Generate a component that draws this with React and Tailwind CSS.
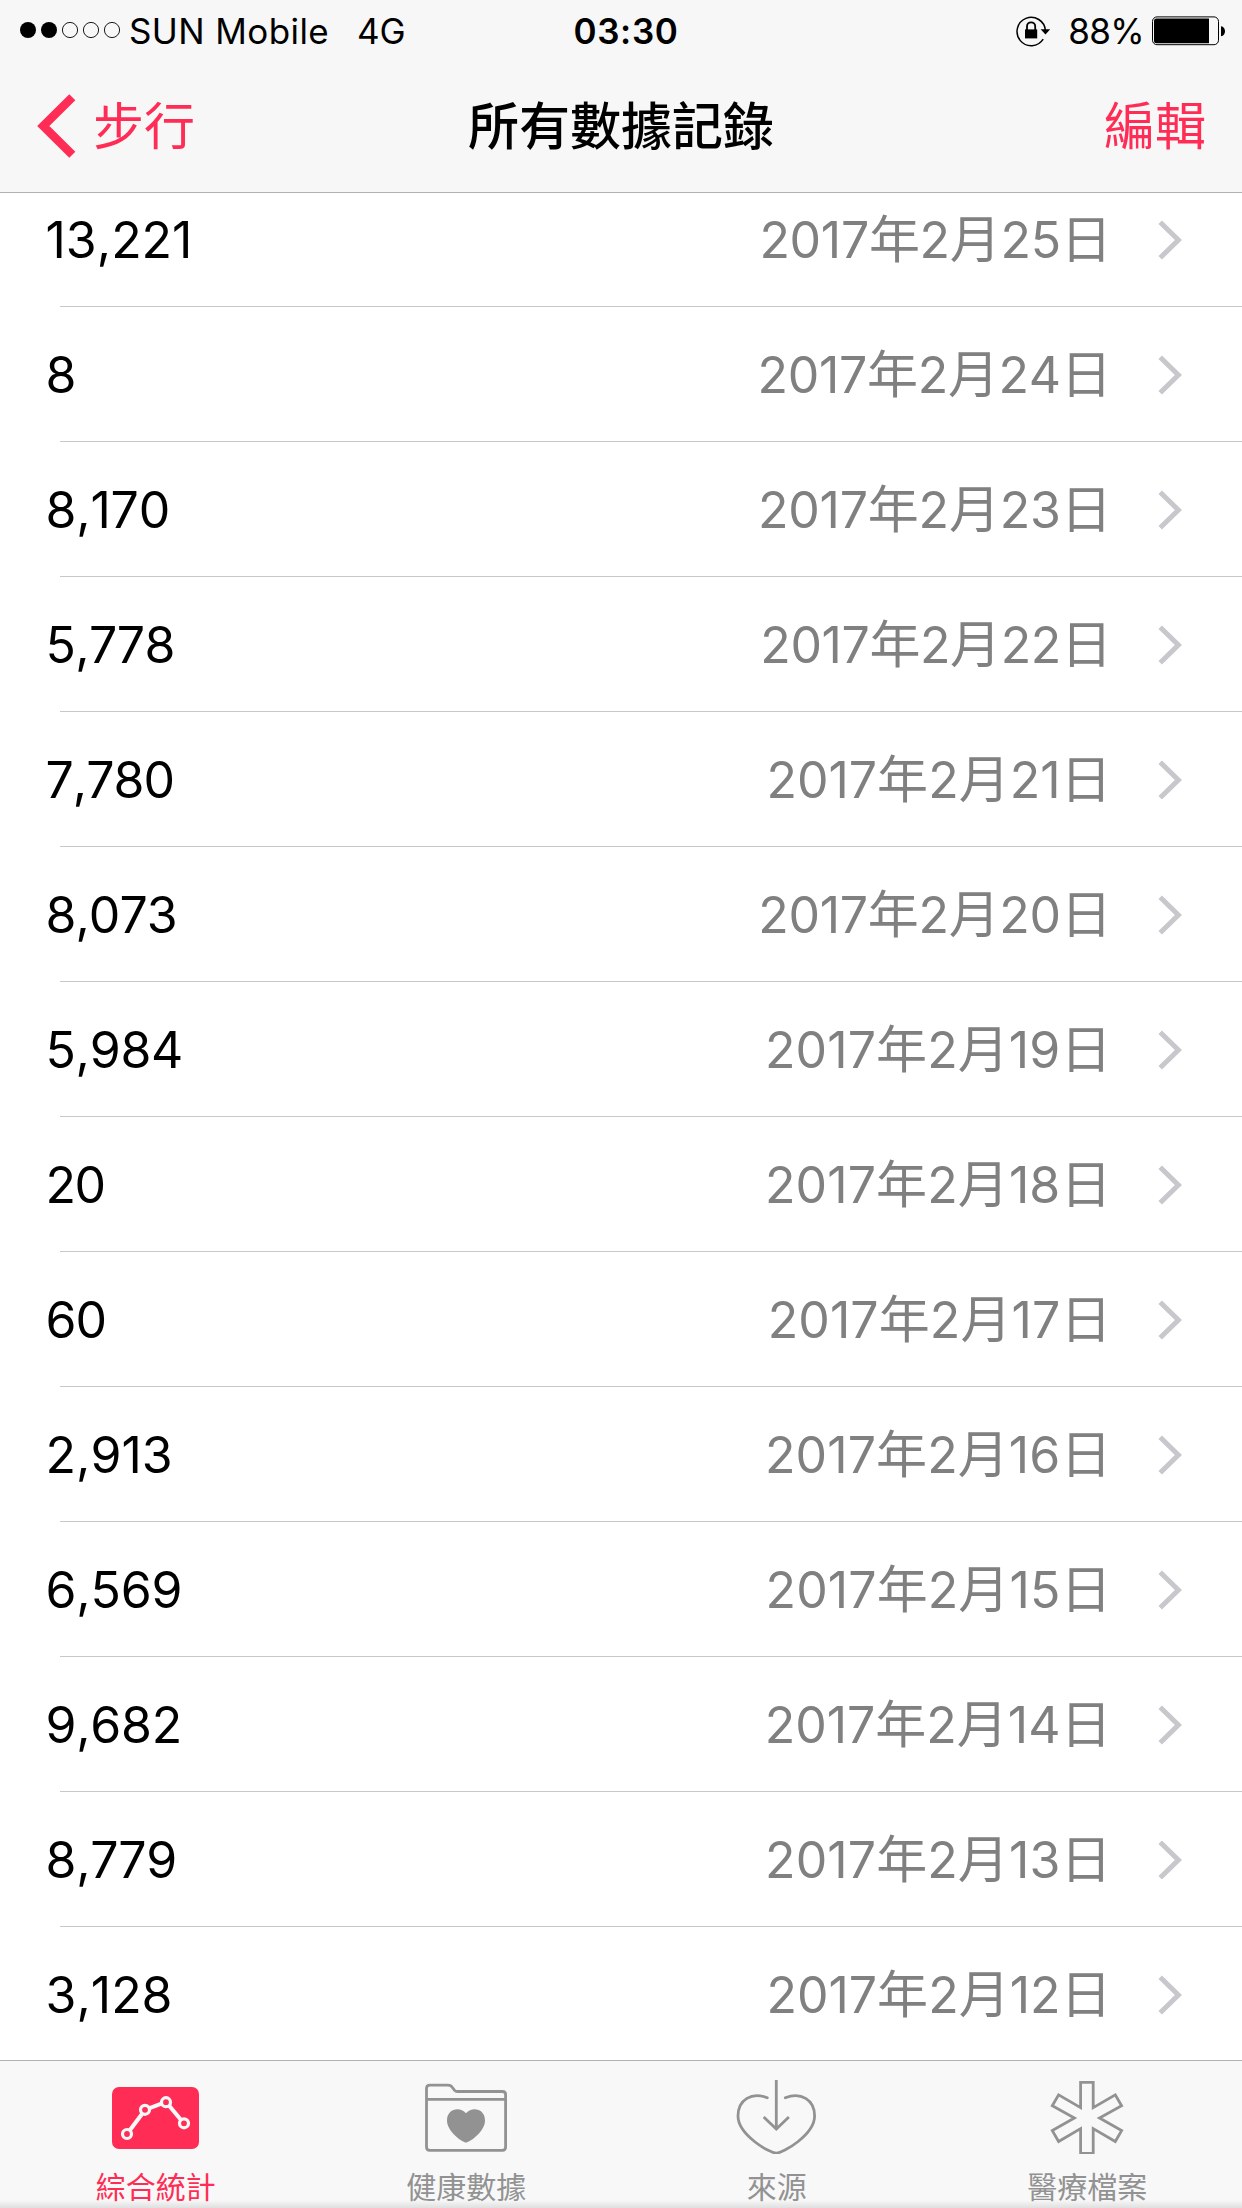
const records = [
  ['13,221', '25', 'tracking-normal', 'tracking-[-0.3px]'],
  ['8', '24', 'tracking-normal', 'tracking-[-0.3px]'],
  ['8,170', '23', 'tracking-[-0.2px]', 'tracking-[-0.2px]'],
  ['5,778', '22', 'tracking-[-0.6px]', 'tracking-[-0.4px]'],
  ['7,780', '21', 'tracking-[-1px]', 'tracking-normal'],
  ['8,073', '20', 'tracking-[-1px]', 'tracking-[-0.3px]'],
  ['5,984', '19', 'tracking-[-0.3px]', 'tracking-[0.1px]'],
  ['20', '18', 'tracking-[-1.5px]', 'tracking-[0.1px]'],
  ['60', '17', 'tracking-[-1px]', 'tracking-[0.1px]'],
  ['2,913', '16', 'tracking-normal', 'tracking-[0.1px]'],
  ['6,569', '15', 'tracking-[-0.2px]', 'tracking-[0.1px]'],
  ['9,682', '14', 'tracking-[-0.3px]', 'tracking-normal'],
  ['8,779', '13', 'tracking-[-0.3px]', 'tracking-[0.1px]'],
  ['3,128', '12', 'tracking-normal', 'tracking-normal'],
];

function RotationLock() {
  return (
    <svg className="h-[32px] w-[36px]" viewBox="0 0 36 32" fill="none">
      <path d="M27.2 24.2A14.2 14.2 0 1 1 29.4 15.5" stroke="#000" strokeWidth="1.5" />
      <path d="M24.6 14.3h9.6l-4.7 5.2z" fill="#000" />
      <rect x="9" y="14.4" width="12.2" height="9" fill="#000" />
      <path d="M11 15v-3.6a4.1 4.1 0 0 1 8.2 0V15" stroke="#000" strokeWidth="1.8" />
    </svg>
  );
}

function Battery() {
  return (
    <svg className="h-[30px] w-[74px]" viewBox="0 0 74 30" fill="none">
      <rect x="0.5" y="0.9" width="66" height="27.8" rx="4.5" stroke="#000" strokeWidth="1" />
      <path d="M4.5 2.6H57V27.2H4.5Q2 27.2 2 24.7V5.1Q2 2.6 4.5 2.6Z" fill="#000" />
      <path d="M69 10.3c5.3 0.4 5.3 9.6 0 10z" fill="#000" />
    </svg>
  );
}

function StatusBar() {
  return (
    <div className="grid h-[62px] grid-cols-3 items-center text-[35px] leading-[62px] text-black">
      <div className="flex items-center pl-[20px]">
        <svg className="h-[18px] w-[101px]" viewBox="0 0 101 18" fill="none">
          <circle cx="8" cy="8" r="8" fill="#000" />
          <circle cx="29" cy="8" r="8" fill="#000" />
          <circle cx="50" cy="8" r="7.6" stroke="#000" strokeWidth="0.9" />
          <circle cx="71" cy="8" r="7.6" stroke="#000" strokeWidth="0.9" />
          <circle cx="92" cy="8" r="7.6" stroke="#000" strokeWidth="0.9" />
        </svg>
        <span className="ml-[8px] w-[228px] whitespace-nowrap tracking-[0.4px]">SUN Mobile</span>
        <span className="whitespace-nowrap">4G</span>
      </div>
      <div className="pl-[10px] text-center font-semibold tracking-[0.6px]">03:30</div>
      <div className="flex items-center justify-end pr-[16px]">
        <RotationLock />
        <span className="mr-[8px] ml-[16px] whitespace-nowrap tracking-[-0.6px]">88%</span>
        <Battery />
      </div>
    </div>
  );
}

function NavBar() {
  return (
    <div className="grid h-[130px] grid-cols-3 items-center pb-[8px] font-['Noto_Sans_CJK_TC',sans-serif] text-[51px] leading-[110px]">
      <div className="flex items-center pl-[37px] text-[#ff2d55]">
        <svg className="mt-[5px] h-[64px] w-[40px]" viewBox="0 0 40 64" fill="none">
          <path d="M35.3 3.3 6.3 32l29 28.7" stroke="#ff2d55" strokeWidth="8.6" />
        </svg>
        <span className="ml-[16px]">步行</span>
      </div>
      <div className="text-center font-medium whitespace-nowrap text-black">所有數據記錄</div>
      <div className="pr-[36px] text-right text-[#ff2d55]">編輯</div>
    </div>
  );
}

function Cjk({ children }) {
  return <span className="font-['Noto_Sans_CJK_TC',sans-serif] text-[51px] leading-none">{children}</span>;
}

function Row({ value, day, valueTracking, dateTracking, last }) {
  return (
    <li className="flex h-[135px] shrink-0 flex-col">
      <div className="flex h-[134px] items-center pt-px pl-[45.5px] text-[50px] leading-[134px] whitespace-nowrap [font-kerning:none]">
        <span className={`grow text-black ${valueTracking}`}>{value}</span>
        <span className={`text-[#808080] ${dateTracking}`}>
          2017<Cjk>年</Cjk>2<Cjk>月</Cjk>{day}<Cjk>日</Cjk>
        </span>
        <svg className="mr-[58px] ml-[46.5px] h-[40px] w-[26px]" viewBox="0 0 26 40" fill="none">
          <path d="M2.2 2.2 20.4 20 2.2 37.8" stroke="#c7c7cc" strokeWidth="5" />
        </svg>
      </div>
      <div className={last ? 'h-px' : 'ml-[60px] h-px bg-[#c8c7cc]'} />
    </li>
  );
}

function TrendIcon() {
  return (
    <svg className="h-[80px] w-[90px]" viewBox="0 0 90 80" fill="none">
      <rect x="2" y="13" width="87" height="62" rx="7" fill="#ff2d55" />
      <path d="M17 60 35 36 56 28 74 49.5" stroke="#f8f8f8" strokeWidth="4" />
      <g fill="#ff2d55" stroke="#f8f8f8" strokeWidth="3.2">
        <circle cx="17" cy="60" r="4.5" />
        <circle cx="35" cy="35.8" r="4.5" />
        <circle cx="56" cy="28.2" r="4.5" />
        <circle cx="74" cy="49.3" r="4.5" />
      </g>
    </svg>
  );
}

function FolderIcon() {
  return (
    <svg className="h-[80px] w-[90px]" viewBox="0 0 90 80" fill="none">
      <g stroke="#929292" strokeWidth="2.8">
        <path d="M5.5 73V14.5Q5.5 11.2 8.8 11.2H27Q30 11.2 31.8 14L33.6 16.4Q34.6 17.5 36.5 17.5H81.5Q84.6 17.5 84.6 20.6V73Q84.6 76.3 81.3 76.3H8.8Q5.5 76.3 5.5 73Z" />
        <path d="M5.5 25.4H84.6" />
      </g>
      <path d="M45 68.6C42 68.6 26 58 26 46.5C26 35 38.5 32 45 39.2C51.5 32 64 35 64 46.5C64 58 48 68.6 45 68.6Z" fill="#929292" />
    </svg>
  );
}

function SourceIcon() {
  return (
    <svg className="h-[80px] w-[90px]" viewBox="0 0 90 80" fill="none" stroke="#929292" strokeWidth="2.8">
      <path strokeLinecap="round" d="M36.3 23.8C21 17.5 7 25.5 7 42C7 61 39 79.2 45.3 79.2C51.6 79.2 83.6 61 83.6 42C83.6 25.5 69.6 17.5 54.3 23.8" />
      <path d="M45.3 6V55M32.7 43 45.3 55 57.9 43" />
    </svg>
  );
}

function MedicalIcon() {
  return (
    <svg className="h-[80px] w-[90px]" viewBox="0 0 90 80" fill="none" stroke="#929292" strokeWidth="2.8">
      <path d="M38.6 8.4H51.2V33.6L73.3 20.8 79.6 31.8 57.5 44 79.6 56.6 73.3 67.5 51.2 54.6V79.4H38.6V54.6L16.6 67.5 10.3 56.6 32.4 44 10.3 31.8 16.6 20.8 38.6 33.6Z" />
    </svg>
  );
}

const tabs = [
  ['綜合統計', TrendIcon],
  ['健康數據', FolderIcon],
  ['來源', SourceIcon],
  ['醫療檔案', MedicalIcon],
];

export default function App() {
  return (
    <div className="flex h-[2208px] w-[1242px] flex-col overflow-hidden bg-white font-['Inter',sans-serif]">
      <header className="z-10 h-[193px] shrink-0 border-b border-[#b2b2b2] bg-[#f7f7f7]">
        <StatusBar />
        <NavBar />
      </header>
      <ul className="-mt-[21px] flex h-[1888px] shrink-0 flex-col overflow-hidden">
        {records.map(([value, day, valueTracking, dateTracking], i) => (
          <Row
            key={day}
            value={value}
            day={day}
            valueTracking={valueTracking}
            dateTracking={dateTracking}
            last={i === records.length - 1}
          />
        ))}
      </ul>
      <nav className="relative grid h-[148px] shrink-0 grid-cols-4 border-t border-[#b2b2b2] bg-[#f8f8f8]">
        {tabs.map(([label, Icon], i) => (
          <div key={label} className="flex flex-col items-center pt-[13px]">
            <Icon />
            <span
              className={
                i === 0
                  ? "mt-[9px] ml-px font-['Noto_Sans_CJK_TC',sans-serif] text-[30px] leading-[44px] text-[#ff2d55]"
                  : "mt-[9px] ml-px font-['Noto_Sans_CJK_TC',sans-serif] text-[30px] leading-[44px] text-[#929292]"
              }
            >
              {label}
            </span>
          </div>
        ))}
        <div className="absolute inset-x-0 bottom-0 h-[8px] bg-linear-to-b from-transparent to-black/10" />
      </nav>
    </div>
  );
}
